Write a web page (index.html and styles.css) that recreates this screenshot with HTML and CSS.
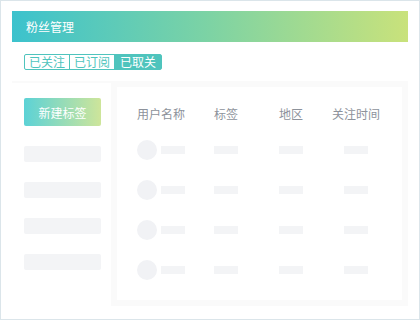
FILE: index.html
```html
<!DOCTYPE html>
<html lang="zh-CN">
<head>
    <meta charset="UTF-8">
    <meta name="viewport" content="width=device-width, initial-scale=1.0">
    <title>粉丝管理</title>
    <link rel="stylesheet" href="styles.css">
</head>
<body>
    <!-- Title bar -->
    <div class="title-bar">粉丝管理</div>

    <!-- Tabs -->
    <div class="tabs">
        <span class="tab">已关注</span>
        <span class="tab">已订阅</span>
        <span class="tab active">已取关</span>
    </div>

    <!-- Main -->
    <div class="main">
        <div class="sidebar">
            <button class="new-tag">新建标签</button>
            <div class="side-item"></div>
            <div class="side-item"></div>
            <div class="side-item"></div>
            <div class="side-item"></div>
        </div>

        <div class="panel">
            <div class="row head">
                <span>用户名称</span>
                <span>标签</span>
                <span>地区</span>
                <span>关注时间</span>
            </div>
            <div class="row">
                <div class="user"><i class="avatar"></i><i class="bar"></i></div>
                <i class="bar"></i><i class="bar"></i><i class="bar"></i>
            </div>
            <div class="row">
                <div class="user"><i class="avatar"></i><i class="bar"></i></div>
                <i class="bar"></i><i class="bar"></i><i class="bar"></i>
            </div>
            <div class="row">
                <div class="user"><i class="avatar"></i><i class="bar"></i></div>
                <i class="bar"></i><i class="bar"></i><i class="bar"></i>
            </div>
            <div class="row">
                <div class="user"><i class="avatar"></i><i class="bar"></i></div>
                <i class="bar"></i><i class="bar"></i><i class="bar"></i>
            </div>
        </div>
    </div>
</body>
</html>
```

FILE: styles.css
```css
html, body {
    height: 100%;
}

body {
    margin: 0;
    box-sizing: border-box;
    border: 1px solid #dbe5ea;
    padding: 10px 11px 0;
    background: white;
    font-family: "Noto Sans CJK SC", "Noto Sans", sans-serif;
    font-size: 12px;
}

.title-bar {
    height: 31px;
    line-height: 31px;
    padding-left: 14px;
    color: white;
    font-size: 12px;
    background: linear-gradient(90deg, #3cc2cd, #7dd3a4 50%, #c9e27b);
}

.tabs {
    display: inline-flex;
    margin: 12px 0 0 12px;
    border: 1px solid #4fc4bd;
    border-radius: 2px;
}

.tab {
    height: 14px;
    line-height: 14px;
    padding: 0 4px;
    color: #4fc4bd;
    border-left: 1px solid #4fc4bd;
}

.tab:first-child {
    border-left: none;
}

.tab.active {
    padding: 0 5px;
    background-color: #4fc4bd;
    color: white;
}

.main {
    display: flex;
    height: 225px;
    margin-top: 11px;
    background-color: #fafafa;
}

.sidebar {
    width: 87px;
    margin-top: 2px;
    padding: 15px 0 0 12px;
    background-color: white;
}

.new-tag {
    display: block;
    width: 77px;
    height: 28px;
    border: none;
    border-radius: 2px;
    color: white;
    font-family: inherit;
    font-size: 12px;
    background: linear-gradient(90deg, #5cd2d6, #cee59a);
    margin-bottom: 20px;
}

.side-item {
    width: 77px;
    height: 16px;
    border-radius: 2px;
    background-color: #f3f4f6;
    margin-bottom: 20px;
}

.panel {
    flex: 1;
    margin: 6px;
    padding: 21px 0 0 20px;
    background-color: white;
}

.row {
    display: grid;
    grid-template-columns: repeat(4, 48px);
    column-gap: 17px;
    justify-items: center;
    align-items: center;
    height: 20px;
    margin-bottom: 20px;
}

.row.head {
    height: 12px;
    line-height: 12px;
    margin-bottom: 20px;
    color: #8d929b;
    white-space: nowrap;
}

.user {
    display: flex;
    align-items: center;
    gap: 4px;
}

.avatar {
    width: 20px;
    height: 20px;
    border-radius: 50%;
    background-color: #f1f2f5;
}

.bar {
    width: 24px;
    height: 8px;
    background-color: #f3f4f6;
}
```
